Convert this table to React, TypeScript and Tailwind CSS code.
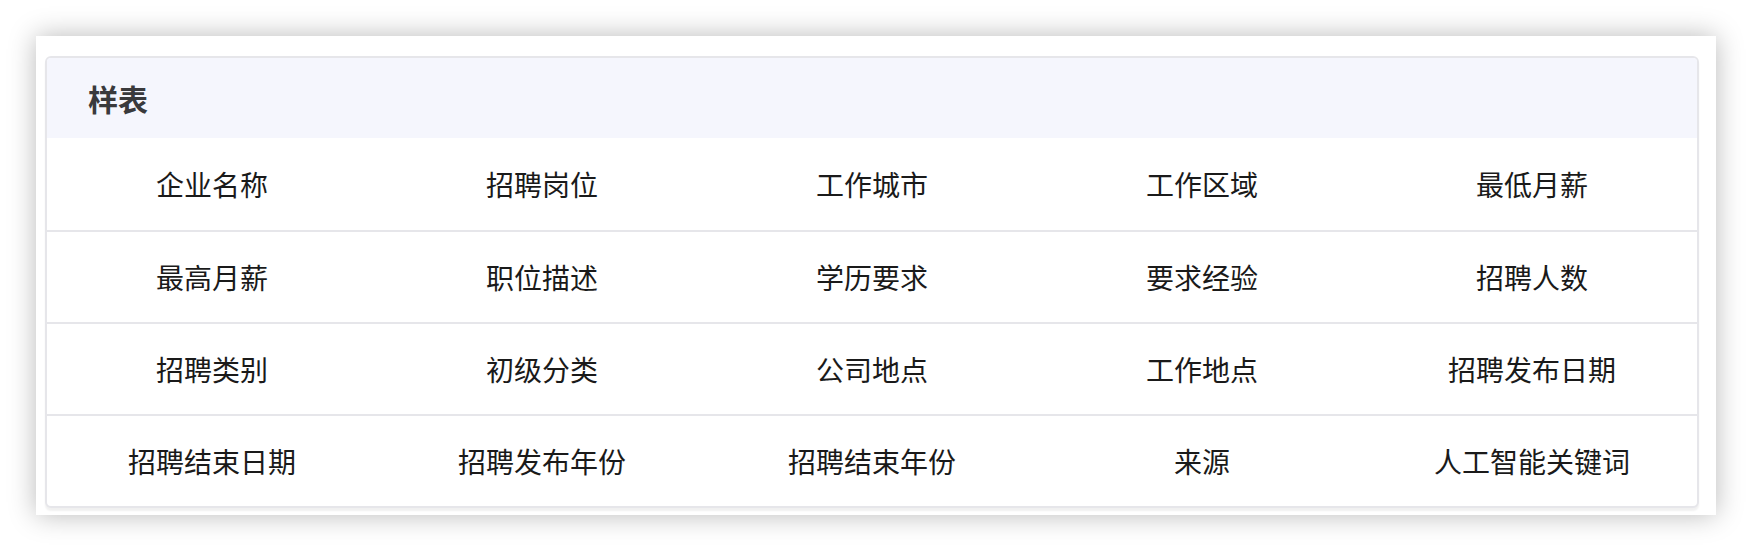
import React from 'react';

const rows: string[][] = [
  ['企业名称', '招聘岗位', '工作城市', '工作区域', '最低月薪'],
  ['最高月薪', '职位描述', '学历要求', '要求经验', '招聘人数'],
  ['招聘类别', '初级分类', '公司地点', '工作地点', '招聘发布日期'],
  ['招聘结束日期', '招聘发布年份', '招聘结束年份', '来源', '人工智能关键词'],
];

const App: React.FC = () => {
  return (
    <div className="w-[1752px] h-[550px] bg-white pt-[36px] pl-[36px] font-['Noto_Sans_CJK_SC','Noto_Sans',sans-serif]">
      <div className="w-[1680px] h-[479px] bg-white shadow-[0_0_26px_rgba(0,0,0,0.28)] pt-[20px] pl-[9px]">
        <div className="w-[1654px] rounded-md border-2 border-[#e6e6ea] bg-white overflow-hidden shadow-[0_3px_2px_rgba(0,0,0,0.06)]">
          <div className="h-[80px] bg-[#f5f6fd] flex items-center pl-[41px]">
            <h2 className="text-[30px] font-bold text-[#3a3a3c] leading-none">样表</h2>
          </div>
          {rows.map((row, i) => (
            <div
              key={i}
              className={`grid grid-cols-5 h-[92px] ${i > 0 ? 'border-t-2 border-[#e6e6ea]' : ''}`}
            >
              {row.map((cell) => (
                <div key={cell} className="flex items-center justify-center text-[28px] text-[#1a1a1a]">
                  {cell}
                </div>
              ))}
            </div>
          ))}
        </div>
      </div>
    </div>
  );
};

export default App;
